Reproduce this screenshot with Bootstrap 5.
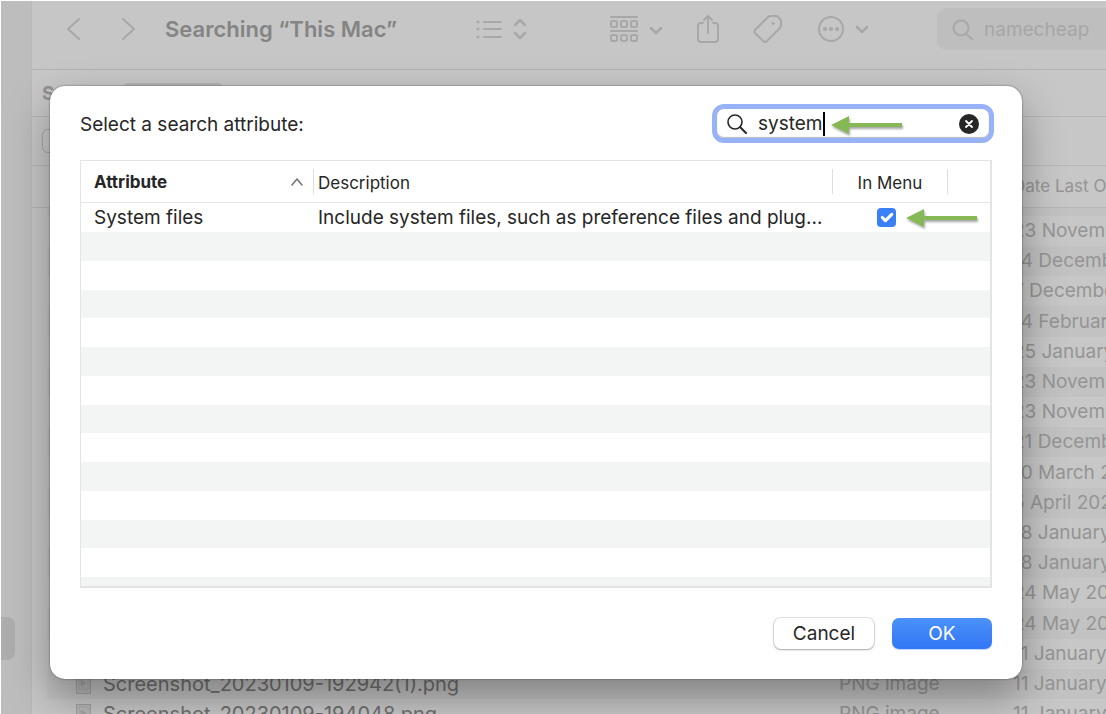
<!DOCTYPE html>
<html lang="en">
<head>
<meta charset="utf-8">
<meta name="viewport" content="width=device-width, initial-scale=1">
<title>Searching “This Mac”</title>
<link href="https://cdn.jsdelivr.net/npm/bootstrap@5.3.0/dist/css/bootstrap.min.css" rel="stylesheet">
<style>
  body { font-family: Inter, "Liberation Sans", sans-serif; font-size: 19px; color: #262626; background: #fff; }
  svg { display: block; flex: none; }
  .finder { padding: 1px 0 0 1px; color: #959595; }
  .side { width: 31px; background: #bdbdbd; border-right: 1px solid #b8b8b8; padding-bottom: 54px; }
  .side-item { width: 14px; height: 43px; background: #adadad; border-radius: 0 8px 8px 0; }
  .pane { background: #c7c7c7; min-width: 0; }
  .toolbar { height: 69px; padding: 0 0 12px 34px; background: #c6c6c6; border-bottom: 1px solid #b3b3b3; color: #a8a8a8; }
  .toolbar button { color: inherit; }
  .toolbar h1 { font-size: 22px; font-weight: 600; color: #848484; padding-left: 30px; }
  .tool-back { margin-right: 41px; }
  .tool-group { margin-left: 83px; }
  .tool-share { margin-left: 33px; }
  .tool-tag { margin-left: 33px; }
  .tool-more { margin-left: 35px; }
  .find-box { width: 169px; height: 42px; margin-left: 68px; padding: 2px 0 0 15px; gap: 11px; background: #bebebe; border-radius: 10px 0 0 10px; }
  .find-box input { color: #a6a6a6; }
  .scope { height: 47px; padding: 3px 0 0 10px; border-bottom: 1px solid #b6b6b6; font-weight: 700; color: #929292; }
  .scope button { width: 100px; height: 24px; margin-left: 6px; background: #b5b5b5; border-radius: 5px; }
  .scope span { width: 75px; }
  .rule { height: 49px; padding-left: 10px; border-bottom: 1px solid #b6b6b6; }
  .rule select { width: 120px; height: 24px; background: #c9c9c9; border: 1px solid #a6a6a6; border-radius: 6px; appearance: none; }
  .files { table-layout: fixed; white-space: nowrap; }
  .files th { height: 41px; font-size: 17px; font-weight: 400; padding: 0; border-bottom: 1px solid #b6b6b6; }
  .files td { height: 30px; line-height: 30px; padding: 0; }
  .files tr:nth-child(5n) td { height: 31px; }
  .files .cut td { height: 9px; }
  .files tbody tr:nth-child(odd) td { background: #c2c2c2; }
  .files .gutter { width: 15px; background: none !important; }
  .files .name { font-size: 20px; color: #6f6f6f; padding-left: 29px; }
  .files .name div { gap: 12px; }
  .kind-col { width: 174px; }
  .date-col { width: 93px; }

  .sheet-area { padding: 86px 84px 35px 50px; }
  .sheet { background: #fff; border-radius: 15px; padding: 18px 30px 30px; box-shadow: 0 0 2px rgba(0,0,0,.55), 0 18px 42px rgba(0,0,0,.34); }
  .sheet-head { margin-right: -2px; }
  .sheet-head label { padding-top: 3px; }
  .query { width: 282px; height: 39px; border: 5px solid #97b2f6; border-radius: 12px; padding: 0 10px; gap: 11px; box-shadow: inset 0 -1px 1px #bbb; }
  .query input { min-width: 0; color: #262626; padding-top: 2px; }
  .bare { border: 0; background: none; padding: 0; outline: 0; }
  .caret { left: 106px; top: 3px; width: 2px; height: 24px; background: #000; }
  .hint { filter: drop-shadow(1px 2px 1px rgba(0,0,0,.35)); }
  .query .hint { left: 114px; top: 6px; }
  .attrs-frame { margin: 17px 0 30px; border: 1px solid #e3e4e4; border-right-width: 2px; border-bottom-width: 2px; min-height: 0; }
  .attrs { table-layout: fixed; white-space: nowrap; }
  .attrs th { height: 41px; padding: 0; font-size: 17px; font-weight: 400; border-bottom: 1px solid #e3e4e4; }
  .attrs th > div { height: 25px; line-height: 25px; padding-top: 2px; border-right: 1px solid #dedede; }
  .attrs td { height: 29px; line-height: 28px; padding: 1px 0 0; }
  .attrs tbody tr:nth-child(4n) td { height: 28px; }
  .attrs tbody tr:nth-child(even) td { background: #f3f5f4; }
  .attrs .c-name { width: 233px; padding-left: 13px; }
  .attrs .c-desc { padding-left: 4px; }
  .attrs .c-menu { width: 115px; }
  .attrs td.c-menu { padding-right: 8px; }
  .attrs .c-end { width: 42px; }
  .attrs .form-check-input { width: 19px; height: 19px; margin: 0; border: 0; border-radius: 4px; background-color: #3b7ff6; background-size: 21px; }
  .attrs .hint { left: 73px; }
  .act { width: 100px; height: 31px; padding: 0; font-size: 19px; line-height: 28px; border: 0; border-radius: 7px; }
  .act-plain { background: #fff; color: #262626; box-shadow: 0 0 1px 1px rgba(0,0,0,.12), 0 1px 2px rgba(0,0,0,.25); }
  .act-main { background: linear-gradient(#4b91f8, #3176f5); color: #fff; box-shadow: 0 1px 1px rgba(49,118,245,.3); }
  .acts { gap: 18px; }
</style>
</head>
<body class="vh-100 overflow-hidden position-relative">
<svg width="0" height="0" class="position-absolute" aria-hidden="true">
  <symbol id="arrow" viewBox="0 0 72 20"><path d="M0 10 18 1v7h53v4H18v7z" fill="#86b855"/></symbol>
  <symbol id="thumb" viewBox="0 0 15 20"><path d="M.5.5h14v19H.5z" fill="#b9b9b9" stroke="#a0a0a0"/><path d="M3 3h9v13H3z" fill="none" stroke="#acacac"/><path d="m5 6 5 3-5 3zM5 14h5" fill="#a6a6a6" stroke="#a6a6a6"/></symbol>
</svg>

<div class="finder d-flex h-100">
  <aside class="side d-flex flex-column justify-content-end flex-shrink-0"><div class="side-item"></div></aside>
  <main class="pane flex-grow-1 overflow-hidden">
    <header class="toolbar d-flex align-items-center">
      <button class="bare tool-back" aria-label="Back"><svg width="14" height="24" fill="none" stroke="currentColor" stroke-width="2" stroke-linecap="round" stroke-linejoin="round"><path d="M13 2 2 12l11 10"/></svg></button>
      <button class="bare" aria-label="Forward"><svg width="14" height="24" fill="none" stroke="currentColor" stroke-width="2" stroke-linecap="round" stroke-linejoin="round"><path d="m2 2 11 10L2 22"/></svg></button>
      <h1 class="m-0 flex-grow-1 text-nowrap">Searching “This Mac”</h1>
      <button class="bare" aria-label="View as list"><svg width="52" height="24" fill="none" stroke="currentColor" stroke-width="2" stroke-linecap="round" stroke-linejoin="round"><path d="M9 5h17M9 12h17M9 20h17"/><path d="M3 5h.1M3 12h.1M3 20h.1" stroke-width="3"/><path d="m40 8 5-5 5 5M40 16l5 5 5-5" stroke-width="2.5"/></svg></button>
      <button class="bare tool-group" aria-label="Group"><svg width="53" height="28" fill="none" stroke="currentColor" stroke-width="2" stroke-linecap="round" stroke-linejoin="round"><path d="M1 2h26M1 16h26"/><rect x="1" y="6" width="6" height="6" rx="1.5"/><rect x="11" y="6" width="6" height="6" rx="1.5"/><rect x="21" y="6" width="6" height="6" rx="1.5"/><rect x="1" y="20" width="6" height="6" rx="1.5"/><rect x="11" y="20" width="6" height="6" rx="1.5"/><rect x="21" y="20" width="6" height="6" rx="1.5"/><path d="m41 13 5 5 5-5" stroke-width="2.5"/></svg></button>
      <button class="bare tool-share" aria-label="Share"><svg width="24" height="32" fill="none" stroke="currentColor" stroke-width="2" stroke-linecap="round" stroke-linejoin="round"><path d="M7 10H5a3 3 0 0 0-3 3v13a3 3 0 0 0 3 3h14a3 3 0 0 0 3-3V13a3 3 0 0 0-3-3h-2M12 20V3M8 7l4-4 4 4"/></svg></button>
      <button class="bare tool-tag" aria-label="Tags"><svg width="30" height="30" fill="none" stroke="currentColor" stroke-width="2" stroke-linecap="round" stroke-linejoin="round"><path d="M15 3 2 16q-1 2 0 3l8 8q2 2 4 0l13-13q1-1 1-3V7q0-1-1-2l-3-3q-1 0-2 0h-4q-2 0-3 1z"/><circle cx="20" cy="9.500" r="1" fill="currentColor" stroke-width="1"/></svg></button>
      <button class="bare tool-more" aria-label="More"><svg width="51" height="26" fill="none" stroke="currentColor" stroke-width="2" stroke-linecap="round" stroke-linejoin="round"><circle cx="13" cy="13" r="12"/><path d="M7 13h.1M13 13h.1M19 13h.1" stroke-width="4"/><path d="m39 11 5 5 5-5" stroke-width="2.5"/></svg></button>
      <div class="find-box d-flex align-items-center flex-shrink-0">
        <svg width="21" height="22" fill="none" stroke="currentColor" stroke-width="2" stroke-linecap="round"><circle cx="9" cy="9" r="7.500"/><path d="m14 15 6 5"/></svg>
        <input class="bare w-100" type="text" value="namecheap" aria-label="Search">
      </div>
    </header>
    <div class="scope d-flex align-items-center"><span>Search:</span><button class="bare" aria-label="This Mac"></button></div>
    <div class="rule d-flex align-items-center"><select aria-label="Criterion"></select></div>
    <table class="files w-100">
      <thead><tr><th class="gutter"></th><th></th><th class="kind-col"></th><th class="date-col">Date Last Opened</th></tr></thead>
      <tbody>
        <tr class="cut"><td class="gutter"></td><td></td><td></td><td></td></tr>
        <tr><td class="gutter"></td><td></td><td></td><td>23 November 2022</td></tr>
        <tr><td class="gutter"></td><td></td><td></td><td>14 December 2022</td></tr>
        <tr><td class="gutter"></td><td></td><td></td><td>7 December 2022</td></tr>
        <tr><td class="gutter"></td><td></td><td></td><td>14 February 2023</td></tr>
        <tr><td class="gutter"></td><td></td><td></td><td>25 January 2023</td></tr>
        <tr><td class="gutter"></td><td></td><td></td><td>23 November 2022</td></tr>
        <tr><td class="gutter"></td><td></td><td></td><td>23 November 2022</td></tr>
        <tr><td class="gutter"></td><td></td><td></td><td>21 December 2022</td></tr>
        <tr><td class="gutter"></td><td></td><td></td><td>10 March 2023</td></tr>
        <tr><td class="gutter"></td><td></td><td></td><td>5 April 2023</td></tr>
        <tr><td class="gutter"></td><td></td><td></td><td>18 January 2023</td></tr>
        <tr><td class="gutter"></td><td></td><td></td><td>18 January 2023</td></tr>
        <tr><td class="gutter"></td><td></td><td></td><td>24 May 2023</td></tr>
        <tr><td class="gutter"></td><td></td><td></td><td>24 May 2023</td></tr>
        <tr><td class="gutter"></td><td></td><td></td><td>11 January 2023</td></tr>
        <tr><td class="gutter"></td><td class="name"><div class="d-flex align-items-center"><svg width="15" height="20"><use href="#thumb"/></svg>Screenshot_20230109-192942(1).png</div></td><td>PNG image</td><td>11 January 2023</td></tr>
        <tr><td class="gutter"></td><td class="name"><div class="d-flex align-items-center"><svg width="15" height="20"><use href="#thumb"/></svg>Screenshot_20230109-194048.png</div></td><td>PNG image</td><td>11 January 2023</td></tr>
      </tbody>
    </table>
  </main>
</div>

<div class="sheet-area position-absolute top-0 start-0 w-100 h-100">
  <section class="sheet d-flex flex-column h-100" role="dialog" aria-label="Select a search attribute">
    <div class="sheet-head d-flex justify-content-between align-items-center">
      <label for="q">Select a search attribute:</label>
      <div class="query position-relative d-flex align-items-center">
        <svg width="20" height="20" fill="none" stroke="#262626" stroke-width="1.600" stroke-linecap="round"><circle cx="8" cy="8" r="7"/><path d="m13 13 6 6" stroke-width="2"/></svg>
        <input id="q" class="bare flex-grow-1" type="text" value="system">
        <span class="caret position-absolute"></span>
        <svg class="hint position-absolute" width="72" height="20"><use href="#arrow"/></svg>
        <button class="bare" aria-label="Clear"><svg width="20" height="20"><circle cx="10" cy="10" r="10" fill="#262626"/><path d="m7 7 6 6m0-6-6 6" stroke="#fff" stroke-width="1.800" stroke-linecap="round"/></svg></button>
      </div>
    </div>
    <div class="attrs-frame flex-grow-1 overflow-hidden">
      <table class="attrs w-100">
        <thead><tr>
          <th class="c-name"><div class="d-flex align-items-center justify-content-between fw-bold pe-2"><span>Attribute</span><svg width="16" height="10" fill="none" stroke="#777" stroke-width="1.600" stroke-linecap="round" stroke-linejoin="round"><path d="m3 8 5-6 5 6"/></svg></div></th>
          <th class="c-desc"><div>Description</div></th>
          <th class="c-menu text-center"><div>In Menu</div></th>
          <th class="c-end"></th>
        </tr></thead>
        <tbody>
          <tr><td class="c-name"><label for="sys">System files</label></td><td class="c-desc">Include system files, such as preference files and plug...</td><td class="c-menu"><div class="position-relative d-flex justify-content-center align-items-center"><input class="form-check-input" type="checkbox" id="sys" checked><svg class="hint position-absolute" width="72" height="20"><use href="#arrow"/></svg></div></td><td></td></tr>
          <tr><td colspan="4"></td></tr><tr><td colspan="4"></td></tr><tr><td colspan="4"></td></tr>
          <tr><td colspan="4"></td></tr><tr><td colspan="4"></td></tr><tr><td colspan="4"></td></tr>
          <tr><td colspan="4"></td></tr><tr><td colspan="4"></td></tr><tr><td colspan="4"></td></tr>
          <tr><td colspan="4"></td></tr><tr><td colspan="4"></td></tr><tr><td colspan="4"></td></tr>
          <tr><td colspan="4"></td></tr>
        </tbody>
      </table>
    </div>
    <div class="acts d-flex justify-content-end">
      <button class="btn act act-plain">Cancel</button>
      <button class="btn act act-main">OK</button>
    </div>
  </section>
</div>
<script src="https://cdn.jsdelivr.net/npm/bootstrap@5.3.0/dist/js/bootstrap.bundle.min.js"></script>
</body>
</html>
